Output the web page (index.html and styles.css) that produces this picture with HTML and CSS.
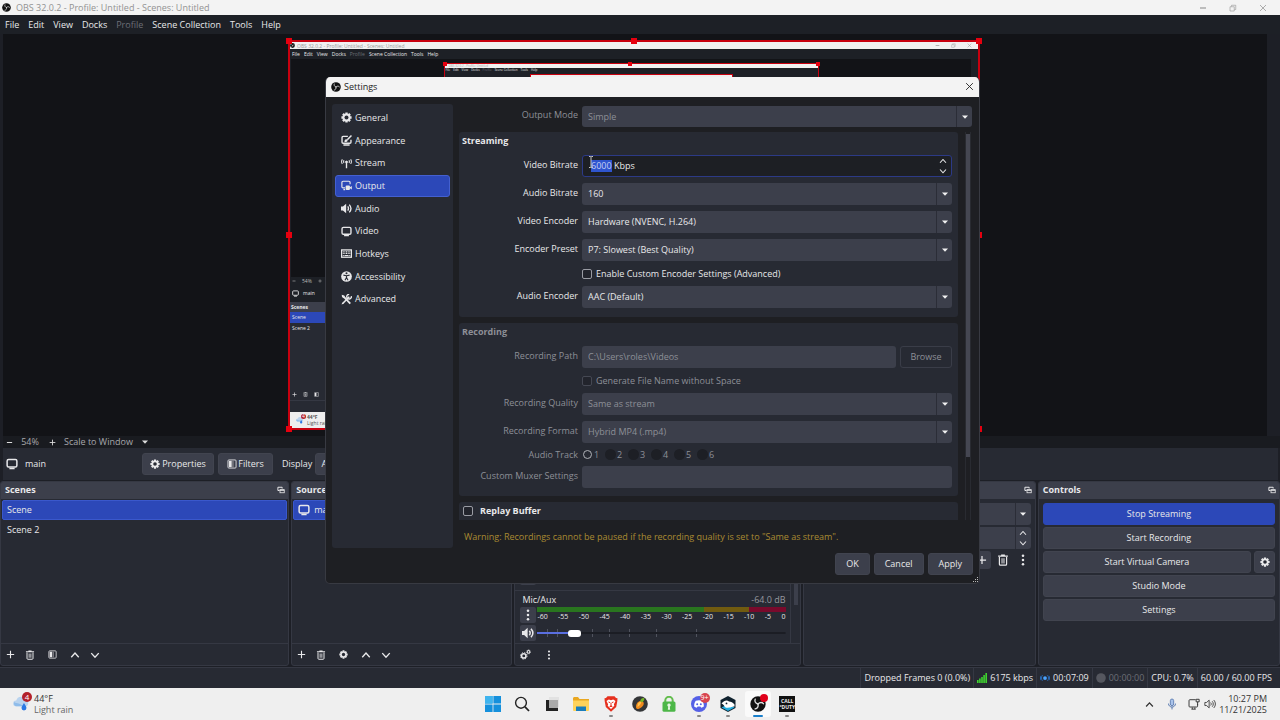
FILE: index.html
```html
<!DOCTYPE html>
<html lang="en">
<head>
<meta charset="utf-8">
<title>OBS 32.0.2 - Profile: Untitled - Scenes: Untitled</title>
<link rel="stylesheet" href="styles.css">
</head>
<body>
<svg class="sprite" aria-hidden="true">
  <symbol id="obs" viewBox="0 0 20 20"><circle cx="10" cy="10" r="9.6" fill="#111"/><g fill="none" stroke="#ddd" stroke-width="1.7" stroke-linecap="round"><path d="M10 10C6.500 9 5.500 6.500 6.500 4"/><path d="M10 10c2.500-2.600 5.200-2.400 6.800-.4"/><path d="M10 10c.8 3.600-.8 5.600-3.600 6.200"/></g></symbol>
  <symbol id="gear" viewBox="0 0 16 16"><g stroke="currentColor" stroke-width="3.400"><path d="M8 .6v14.800M.6 8h14.800M2.800 2.800l10.400 10.400M13.200 2.800L2.800 13.200"/></g><circle cx="8" cy="8" r="5.700" fill="currentColor"/><circle class="hole" cx="8" cy="8" r="2.900"/></symbol>
  <symbol id="gears" viewBox="0 0 16 16"><g fill="none" stroke="currentColor"><circle cx="5.500" cy="10" r="3.200" stroke-width="2.200"/><circle cx="5.500" cy="10" r="4.700" stroke-width="1.400" stroke-dasharray="2 1.690"/><circle cx="12.400" cy="4.200" r="1.900" stroke-width="1.500"/><circle cx="12.400" cy="4.200" r="3" stroke-width="1" stroke-dasharray="1.300 1.056"/></g></symbol>
  <symbol id="monitor" viewBox="0 0 16 16"><rect x="1.500" y="2" width="13" height="10" rx="2" fill="none" stroke="currentColor" stroke-width="2"/><path d="M4.500 13h7v2h-7z" fill="currentColor"/></symbol>
  <symbol id="appearance" viewBox="0 0 16 16"><path d="M10 2H3a1.500 1.500 0 0 0-1.500 1.500v7A1.500 1.500 0 0 0 3 12h10a1.500 1.500 0 0 0 1.500-1.500V7" fill="none" stroke="currentColor" stroke-width="2"/><path d="M3.500 13.500h9V15.500h-9z" fill="currentColor"/><path d="M15.200.8L9.200 7" stroke="currentColor" stroke-width="2.200"/><path d="M5 10c0-3 1.500-4 3.500-3.600L9.700 8C9.500 9.800 7.500 10.500 5 10z" fill="currentColor"/></symbol>
  <symbol id="stream" viewBox="0 0 16 16"><g fill="none" stroke="currentColor" stroke-width="1.500"><path d="M2 2C.6 4 .6 6.600 2 8.600M4.400 3.200c-.8 1.300-.8 2.900 0 4.200M14 2c1.400 2 1.400 4.600 0 6.600M11.600 3.200c.8 1.300.8 2.900 0 4.200"/></g><path d="M5.500 5.300L8 3.500l2.500 1.800L9 7.500V15H7V7.500z" fill="currentColor"/></symbol>
  <symbol id="output" viewBox="0 0 16 16"><path d="M6 11.500H3A1.700 1.700 0 0 1 1.300 9.800V3.500A1.700 1.700 0 0 1 3 1.800h8.500a1.700 1.700 0 0 1 1.700 1.700V6M3.500 14H6" fill="none" stroke="currentColor" stroke-width="1.700"/><rect x="6.800" y="8" width="6.200" height="6.500" rx="1.500" fill="currentColor"/><path d="M13 10.500l2.700-1.800v5L13 12z" fill="currentColor"/></symbol>
  <symbol id="speaker" viewBox="0 0 16 16"><path d="M0 5.200h2.800L7.500 1v14L2.800 10.800H0z" fill="currentColor"/><path d="M9.800 5c1.300 1.800 1.300 4.200 0 6M12 2.300c3 3.400 3 8 0 11.400" fill="none" stroke="currentColor" stroke-width="2"/></symbol>
  <symbol id="keyboard" viewBox="0 0 16 16"><rect x=".8" y="2.800" width="14.400" height="10.600" fill="none" stroke="currentColor" stroke-width="1.900"/><path d="M2.500 5.700h11M2.500 8.100h11" stroke="currentColor" stroke-width="1.600" stroke-dasharray="1.500 .9"/><path d="M2.500 10.800h1.500M5 10.800h6M12 10.800h1.500" stroke="currentColor" stroke-width="1.600"/></symbol>
  <symbol id="access" viewBox="0 0 16 16"><circle cx="8" cy="8" r="7.800" fill="currentColor"/><circle cx="8" cy="3.400" r="1.500" fill="#272a33"/><path d="M3.500 6l4.500.8 4.500-.8M8 6.500V9.500L5.800 13.500M8 9.500l2.200 4" fill="none" stroke="#272a33" stroke-width="1.600"/></symbol>
  <symbol id="tools" viewBox="0 0 16 16"><path d="M3.500 3.500L13.500 14" stroke="currentColor" stroke-width="2.600"/><path d="M1 1l3.800 1.300.6 2.700-1.700 1.200L1.500 4.500z" fill="currentColor"/><path d="M12 4L2.500 13.800" stroke="currentColor" stroke-width="2.400"/><path d="M15 3a3.400 3.400 0 1 1-3-2.500" fill="none" stroke="currentColor" stroke-width="2"/><path d="M.8 15.400l1-3 2 1.800z" fill="currentColor"/></symbol>
  <symbol id="filter" viewBox="0 0 16 16"><rect x="1.500" y="1.500" width="13" height="13" rx="1.500" fill="none" stroke="currentColor" stroke-width="1.400"/><path d="M3 3h4.500v10H3z" fill="currentColor"/><path d="M8.500 3h2v10h-2z" fill="currentColor" opacity=".45"/></symbol>
  <symbol id="plus" viewBox="0 0 16 16"><path d="M8 1.500v13M1.500 8h13" stroke="currentColor" stroke-width="2"/></symbol>
  <symbol id="minus" viewBox="0 0 16 16"><path d="M2 8h12" stroke="currentColor" stroke-width="2.400"/></symbol>
  <symbol id="trash" viewBox="0 0 16 16"><path d="M1.500 2.800h13M5.500 1.500h5" stroke="currentColor" stroke-width="1.800"/><path d="M3.200 4v9.500c0 .8.500 1.300 1.300 1.300h7c.8 0 1.300-.5 1.300-1.300V4" fill="none" stroke="currentColor" stroke-width="1.600"/><path d="M5.500 5.500h5v7h-5z" fill="currentColor" opacity=".55"/></symbol>
  <symbol id="up" viewBox="0 0 16 16"><path d="M2 11.500L8 5l6 6.500" fill="none" stroke="currentColor" stroke-width="2.200"/></symbol>
  <symbol id="down" viewBox="0 0 16 16"><path d="M2 5l6 6.500L14 5" fill="none" stroke="currentColor" stroke-width="2.200"/></symbol>
  <symbol id="dots" viewBox="0 0 16 16"><circle cx="8" cy="2.400" r="1.700" fill="currentColor"/><circle cx="8" cy="8" r="1.700" fill="currentColor"/><circle cx="8" cy="13.600" r="1.700" fill="currentColor"/></symbol>
  <symbol id="float" viewBox="0 0 16 16"><path d="M5 9H1.800V2.500h8.500V5" fill="none" stroke="currentColor" stroke-width="2"/><rect x="6" y="7.500" width="8.500" height="6" fill="none" stroke="currentColor" stroke-width="1.600"/><path d="M5.500 7h9v2.500h-9z" fill="currentColor"/></symbol>
  <symbol id="caret" viewBox="0 0 16 16"><path d="M2 5h12L8 11.500z" fill="currentColor"/></symbol>
  <symbol id="close" viewBox="0 0 16 16"><path d="M2 2l12 12M14 2L2 14" stroke="currentColor" stroke-width="1.600"/></symbol>
  <symbol id="restore" viewBox="0 0 16 16"><path d="M2 5.500h8.500V14H2zM5 5V2.500h8.500V11H11" fill="none" stroke="currentColor" stroke-width="1.300"/></symbol>
  <symbol id="rain" viewBox="0 0 24 24"><path d="M4 16.500a4 4 0 0 1 .6-8A7 7 0 0 1 18 8a4.500 4.500 0 0 1 1 8.500z" fill="#b9d3ee"/><path d="M4 16.500a4 4 0 0 1-2-6c3 3 9 1 12 6z" fill="#8fbcea"/><path d="M15.500 12c2.300 3.500 3.500 5.300 3.500 7a3.500 3.500 0 0 1-7 0c0-1.700 1.200-3.500 3.500-7z" fill="#2b78e4"/></symbol>
</svg>

<div class="desktop">
  <header class="titlebar">
    <svg class="i9"><use href="#obs"/></svg>
    <span>OBS 32.0.2 - Profile: Untitled - Scenes: Untitled</span>
    <div class="winbtns">
      <button aria-label="Minimize"><svg class="i8"><use href="#minus"/></svg></button>
      <button aria-label="Restore"><svg class="i8"><use href="#restore"/></svg></button>
      <button aria-label="Close"><svg class="i8"><use href="#close"/></svg></button>
    </div>
  </header>
  <nav class="menubar">
    <button>File</button><button>Edit</button><button>View</button><button>Docks</button><button class="dim" disabled>Profile</button><button>Scene Collection</button><button>Tools</button><button>Help</button>
  </nav>

  <main class="preview">
    <div class="canvas">
      <div class="mini">
        <div class="mini-title"><svg><use href="#obs"/></svg><span>OBS 32.0.2 - Profile: Untitled - Scenes: Untitled</span><i></i><svg><use href="#minus"/></svg><svg><use href="#restore"/></svg><svg><use href="#close"/></svg></div>
        <div class="mini-menu"><span>File</span><span>Edit</span><span>View</span><span>Docks</span><span class="dim">Profile</span><span>Scene Collection</span><span>Tools</span><span>Help</span></div>
        <div class="mini-stage">
          <div class="canvas nested">
            <div class="nest-title">OBS 32.0.2 - Profile: Untitled</div>
            <div class="nest-menu"><span>File</span><span>Edit</span><span>View</span><span>Docks</span><span class="dim">Profile</span><span>Scene Collection</span><span>Tools</span><span>Help</span></div>
            <div class="canvas third"></div>
            <b class="h tl"></b><b class="h tc"></b><b class="h tr"></b>
          </div>
        </div>
        <div class="mini-zoom"><svg><use href="#minus"/></svg><span>54%</span><svg><use href="#plus"/></svg><span>Scale</span></div>
        <div class="mini-source"><svg><use href="#monitor"/></svg><span>main</span></div>
        <div class="mini-head">Scenes</div>
        <div class="mini-row on">Scene</div>
        <div class="mini-row">Scene 2</div>
        <div class="mini-tools"><svg><use href="#plus"/></svg><svg><use href="#trash"/></svg><svg><use href="#filter"/></svg></div>
        <div class="mini-status"></div>
        <div class="mini-task"><svg><use href="#rain"/></svg><em>4</em><div><b>44°F</b><br>Light rain</div></div>
      </div>
      <b class="h tl"></b><b class="h tc"></b><b class="h tr"></b><b class="h ml"></b><b class="h mr"></b><b class="h bl"></b><b class="h br"></b>
    </div>
  </main>

  <div class="zoombar">
    <button aria-label="Zoom out"><svg class="i7"><use href="#minus"/></svg></button>
    <span class="pct">54%</span>
    <button aria-label="Zoom in"><svg class="i7"><use href="#plus"/></svg></button>
    <span class="scale">Scale to Window</span>
    <button aria-label="Scale mode"><svg class="i8"><use href="#caret"/></svg></button>
  </div>

  <section class="context">
    <svg class="i12"><use href="#monitor"/></svg>
    <span class="src">main</span>
    <button class="btn props"><svg class="i10"><use href="#gear"/></svg>Properties</button>
    <button class="btn filt"><svg class="i10"><use href="#filter"/></svg>Filters</button>
    <label for="display">Display</label>
    <select id="display" class="btn disp"><option>ASUS VG248</option></select>
  </section>

  <section class="docks">
    <article class="dock scenes">
      <h2>Scenes<svg class="i8"><use href="#float"/></svg></h2>
      <ul><li class="on">Scene</li><li>Scene 2</li></ul>
      <footer>
        <button aria-label="Add scene"><svg class="i9"><use href="#plus"/></svg></button>
        <button aria-label="Remove scene"><svg class="i10"><use href="#trash"/></svg></button>
        <button aria-label="Scene filters" class="wide"><svg class="i9"><use href="#filter"/></svg></button>
        <button aria-label="Move up" class="wide"><svg class="i10"><use href="#up"/></svg></button>
        <button aria-label="Move down"><svg class="i10"><use href="#down"/></svg></button>
      </footer>
    </article>
    <article class="dock sources">
      <h2>Sources<svg class="i8"><use href="#float"/></svg></h2>
      <ul><li class="on"><svg class="i12"><use href="#monitor"/></svg>main</li></ul>
      <footer>
        <button aria-label="Add source"><svg class="i9"><use href="#plus"/></svg></button>
        <button aria-label="Remove source"><svg class="i10"><use href="#trash"/></svg></button>
        <button aria-label="Source properties" class="wide"><svg class="i9"><use href="#gear"/></svg></button>
        <button aria-label="Move up" class="wide"><svg class="i10"><use href="#up"/></svg></button>
        <button aria-label="Move down"><svg class="i10"><use href="#down"/></svg></button>
      </footer>
    </article>
    <article class="dock mixer">
      <h2>Audio Mixer<svg class="i8"><use href="#float"/></svg></h2>
      <div class="mixbody">
        <div class="channels">
          <div class="prev"><button class="tile" aria-label="Mute desktop audio"></button><i class="knob"></i></div>
          <div class="chan">
            <div class="chead"><label for="mic">Mic/Aux</label><span>-64.0 dB</span></div>
            <div class="crow">
              <button class="tile" aria-label="Mic options"><svg class="i12"><use href="#dots"/></svg></button>
              <div class="meter">
                <div class="bar"></div>
                <div class="nums"><span>-60</span><span>-55</span><span>-50</span><span>-45</span><span>-40</span><span>-35</span><span>-30</span><span>-25</span><span>-20</span><span>-15</span><span>-10</span><span>-5</span><span>0</span></div>
              </div>
            </div>
            <div class="crow">
              <button class="tile" aria-label="Mute mic"><svg class="i12"><use href="#speaker"/></svg></button>
              <input id="mic" type="range" min="0" max="100" value="13">
            </div>
          </div>
        </div>
        <div class="mixscroll"><i></i></div>
      </div>
      <footer>
        <button aria-label="Audio properties"><svg class="i11"><use href="#gears"/></svg></button>
        <button aria-label="Mixer menu" class="wide"><svg class="i10"><use href="#dots"/></svg></button>
      </footer>
    </article>
    <article class="dock trans">
      <h2>Scene Transitions<svg class="i8"><use href="#float"/></svg></h2>
      <div class="transbody">
        <div class="combo"><select aria-label="Transition"><option></option></select><span class="arrow"><svg class="i8"><use href="#caret"/></svg></span></div>
        <div class="combo"><input type="text" aria-label="Duration"><span class="spin"><svg class="i8"><use href="#up"/></svg><svg class="i8"><use href="#down"/></svg></span></div>
        <div class="ticons">
          <button aria-label="Add transition" class="lit"><svg class="i10"><use href="#plus"/></svg></button>
          <button aria-label="Remove transition"><svg class="i12"><use href="#trash"/></svg></button>
          <button aria-label="Transition menu"><svg class="i12"><use href="#dots"/></svg></button>
        </div>
      </div>
    </article>
    <article class="dock controls">
      <h2>Controls<svg class="i8"><use href="#float"/></svg></h2>
      <div class="ctlbody">
        <button class="btn primary">Stop Streaming</button>
        <button class="btn">Start Recording</button>
        <div class="pair"><button class="btn">Start Virtual Camera</button><button class="btn cog" aria-label="Virtual camera settings"><svg class="i10"><use href="#gear"/></svg></button></div>
        <button class="btn">Studio Mode</button>
        <button class="btn">Settings</button>
      </div>
    </article>
  </section>

  <section class="status">
    <div>Dropped Frames 0 (0.0%)</div>
    <div><svg class="i10" viewBox="0 0 10 10"><path d="M0 7h1.600v3H0zM2.100 5.500h1.600V10H2.100zM4.200 4h1.600v6H4.200zM6.300 2h1.600v8H6.300zM8.400 0H10v10H8.400z" fill="#3fd52f"/></svg>6175 kbps</div>
    <div><svg class="i10" viewBox="0 0 16 16"><circle cx="8" cy="8" r="3" fill="#4aa3ff"/><path d="M4 3.500c-2.200 2.600-2.200 6.400 0 9M12 3.500c2.200 2.600 2.200 6.400 0 9M1.500 4.500c-1 2.200-1 4.800 0 7M14.500 4.500c1 2.200 1 4.800 0 7" fill="none" stroke="#2a71c4" stroke-width="1.400"/></svg>00:07:09</div>
    <div class="dim"><svg class="i10" viewBox="0 0 10 10"><circle cx="5" cy="5" r="4.800" fill="#55575f"/></svg>00:00:00</div>
    <div>CPU: 0.7%</div>
    <div>60.00 / 60.00 FPS</div>
  </section>

  <footer class="taskbar">
    <div class="weather"><span class="wicon"><svg><use href="#rain"/></svg><em>4</em></span><div><b>44°F</b><br>Light rain</div></div>
    <div class="apps">
      <button aria-label="Start"><svg viewBox="0 0 16 16"><path d="M0 0h7.600v7.600H0zM8.400 0H16v7.600H8.400zM0 8.400h7.600V16H0zM8.400 8.400H16V16H8.400z" fill="#1590dc"/><path d="M0 0h7.600v7.600H0z" fill="#3fb4ee"/></svg></button>
      <button aria-label="Search"><svg viewBox="0 0 16 16"><circle cx="7" cy="6.800" r="5.400" fill="none" stroke="#222" stroke-width="1.400"/><path d="M11 10.800l4 4.200" stroke="#222" stroke-width="1.800"/></svg></button>
      <button aria-label="Task view"><svg viewBox="0 0 16 16"><path d="M5 1h10v10H5z" fill="#e2e2e2"/><path d="M2 4h3v8h9v3H2z" fill="#222"/><path d="M5 4h9v8H5z" fill="#aaa"/></svg></button>
      <button aria-label="File Explorer"><svg viewBox="0 0 16 16"><path d="M0 2.500C0 1.600.6 1 1.500 1H5l1.500 2H16v11H0z" fill="#e9a720"/><path d="M0 4.500h16V14a1 1 0 0 1-1 1H1a1 1 0 0 1-1-1z" fill="#ffd35b"/><path d="M3 10.500h10V15H3z" fill="#1a7dbb"/></svg></button>
      <button aria-label="Brave" class="run"><svg viewBox="0 0 16 16"><path d="M4.500.3h7L13 2l1.500.3-.2 3L13.200 11 8 15.800 2.800 11 1.700 5.300l-.2-3L3 2z" fill="#e6301e"/><path d="M3.500 5l2.300-1.500L8 4.200l2.200-.7L12.500 5l-1.600 3.300.4 1.500L8 13l-3.300-3.200.4-1.500z" fill="#fff"/><path d="M5.500 6l1.800.7M10.500 6l-1.800.7M8 7v2.500l-1.200 1h2.400L8 9.500" stroke="#e6301e" stroke-width="1" fill="none"/></svg></button>
      <button aria-label="FL Studio"><svg viewBox="0 0 16 16"><circle cx="8" cy="8" r="7.800" fill="#343638"/><path d="M10.800 5.200C13 7.500 11 10.500 8.800 11.800 7 13 5.200 13.500 4.400 12.600 3.600 11 4 8.500 5.500 6.600 7 4.800 9.200 4 10.800 5.200z" fill="#f08a1d"/><path d="M6 7.500c1.300-1.500 2.500-1.700 3.300-1C8.500 8.500 7 10 5.300 11z" fill="#ffc34d"/><path d="M8.300 5.200C8.300 3 9.800 1.500 12.300 2c.4 2-1 4-3 4.200z" fill="#74b52a"/></svg></button>
      <button aria-label="VPN"><svg viewBox="0 0 16 16"><path d="M4.300 7V4.500a3.700 3.700 0 0 1 7.400 0V7" fill="none" stroke="#62bd4c" stroke-width="2"/><rect x="1.500" y="5.500" width="13" height="10.300" rx="1.500" fill="#4db748"/><path d="M8 7.500a1.700 1.700 0 0 1 .8 3.200l.4 3H6.800l.4-3A1.700 1.700 0 0 1 8 7.500z" fill="#e5f6e0"/></svg></button>
      <button aria-label="Discord" class="run"><svg viewBox="0 0 16 16"><circle cx="8" cy="8" r="8" fill="#5560e6"/><path d="M4.800 4.800C7 4 9 4 11.200 4.800c1.200 1.700 1.800 3.700 1.600 5.700-1 .8-1.700 1-2.600 1.200l-.8-1.200H6.600l-.8 1.200c-.9-.2-1.600-.4-2.600-1.200-.2-2 .4-4 1.600-5.700z" fill="#fff"/><circle cx="6.200" cy="8.300" r="1" fill="#5560e6"/><circle cx="9.800" cy="8.300" r="1" fill="#5560e6"/></svg><em>9+</em></button>
      <button aria-label="Game launcher" class="run"><svg viewBox="0 0 16 16"><path d="M8 0l7.500 4v8L8 16 .5 12V4z" fill="#10222e"/><path d="M1.500 11.500L8 15l6.500-3.500-3-1.500-7 0z" fill="#23aee0"/><path d="M1.500 7.500C4 4.500 7 3.800 9 5.500c2 .3 4 1 5.500 3v2c-2-.3-3.500 1-5.500 1-1.500.6-3 .5-4-.5C4.500 10 3.500 8.500 1.500 7.500z" fill="#fff"/><circle cx="6.500" cy="7.400" r=".9" fill="#10222e"/></svg></button>
      <button aria-label="OBS Studio" class="run active"><svg><use href="#obs"/></svg><i class="rec"></i></button>
      <button aria-label="Call of Duty" class="run"><span class="cod">CALL<br>°DUTY</span></button>
    </div>
    <div class="tray">
      <svg class="i9"><use href="#up"/></svg>
      <svg class="mic" viewBox="0 0 12 14"><rect x="4" y="1" width="4" height="8" rx="2" fill="#a9c3ea" stroke="#4a6da8" stroke-width=".9"/><path d="M1.800 6.500C2 12 10 12 10.200 6.500M6 10.700V13.500" fill="none" stroke="#4a6da8" stroke-width="1.100"/></svg>
      <svg class="net" viewBox="0 0 14 14"><path d="M9 2H2.200A1 1 0 0 0 1.200 3v6.500a1 1 0 0 0 1 1h8a1 1 0 0 0 1-1V7M4 13h5M5 11v2M8 11v2" fill="none" stroke="#333" stroke-width="1.100"/><path d="M9.500 1.500h3.500v3h-3.500zM11.200 4.500V8" fill="none" stroke="#333" stroke-width="1.100"/></svg>
      <svg class="vol" viewBox="0 0 14 14"><path d="M1 5.200h2L6 2.500v9L3 8.800H1z" fill="none" stroke="#333"/><path d="M7.800 5.300c.8 1 .8 2.400 0 3.400M9.600 3.800c1.600 1.900 1.600 4.500 0 6.400M11.300 2.300c2.600 2.800 2.600 6.600 0 9.400" fill="none" stroke="#333"/></svg>
      <time>10:27 PM<br>11/21/2025</time>
    </div>
  </footer>

  <div class="dialog" role="dialog" aria-label="Settings">
    <header class="dtitle"><svg class="i10"><use href="#obs"/></svg><span>Settings</span><button aria-label="Close settings"><svg class="i9"><use href="#close"/></svg></button></header>
    <div class="dbody">
      <nav class="side">
        <button><svg class="i11"><use href="#gear"/></svg>General</button>
        <button><svg class="i11"><use href="#appearance"/></svg>Appearance</button>
        <button><svg class="i11"><use href="#stream"/></svg>Stream</button>
        <button class="on"><svg class="i11"><use href="#output"/></svg>Output</button>
        <button><svg class="i11"><use href="#speaker"/></svg>Audio</button>
        <button><svg class="i11"><use href="#monitor"/></svg>Video</button>
        <button><svg class="i11"><use href="#keyboard"/></svg>Hotkeys</button>
        <button><svg class="i11"><use href="#access"/></svg>Accessibility</button>
        <button><svg class="i11"><use href="#tools"/></svg>Advanced</button>
      </nav>
      <div class="dmain">
        <div class="mode off"><label for="mode">Output Mode</label><div class="combo"><select id="mode" disabled><option>Simple</option></select><span class="arrow"><svg class="i8"><use href="#caret"/></svg></span></div></div>
        <div class="scroll">
          <div class="groups">
            <section class="group">
              <h3>Streaming</h3>
              <div class="form">
                <label for="vb">Video Bitrate</label>
                <div class="combo focus"><input id="vb" type="text" value="6000 Kbps"><span class="spin"><svg class="i8"><use href="#up"/></svg><svg class="i8"><use href="#down"/></svg></span>
                  <svg class="ibeam" viewBox="0 0 6 12"><path d="M1 .5h1.500L3 1l.5-.5H5M3 1v10M1 11.500h1.500L3 11l.5.500H5" fill="none" stroke="#c9c9c9"/></svg></div>
                <label for="ab">Audio Bitrate</label>
                <div class="combo"><select id="ab"><option>160</option></select><span class="arrow"><svg class="i8"><use href="#caret"/></svg></span></div>
                <label for="ve">Video Encoder</label>
                <div class="combo"><select id="ve"><option>Hardware (NVENC, H.264)</option></select><span class="arrow"><svg class="i8"><use href="#caret"/></svg></span></div>
                <label for="ep">Encoder Preset</label>
                <div class="combo"><select id="ep"><option>P7: Slowest (Best Quality)</option></select><span class="arrow"><svg class="i8"><use href="#caret"/></svg></span></div>
                <label class="check"><input type="checkbox">Enable Custom Encoder Settings (Advanced)</label>
                <label for="ae">Audio Encoder</label>
                <div class="combo"><select id="ae"><option>AAC (Default)</option></select><span class="arrow"><svg class="i8"><use href="#caret"/></svg></span></div>
              </div>
            </section>
            <section class="group off">
              <h3>Recording</h3>
              <div class="form">
                <label for="rp">Recording Path</label>
                <div class="path"><div class="combo"><input id="rp" type="text" value="C:\Users\roles\Videos" disabled></div><button class="browse" disabled>Browse</button></div>
                <label class="check"><input type="checkbox" disabled>Generate File Name without Space</label>
                <label for="rq">Recording Quality</label>
                <div class="combo"><select id="rq" disabled><option>Same as stream</option></select><span class="arrow"><svg class="i8"><use href="#caret"/></svg></span></div>
                <label for="rf">Recording Format</label>
                <div class="combo"><select id="rf" disabled><option>Hybrid MP4 (.mp4)</option></select><span class="arrow"><svg class="i8"><use href="#caret"/></svg></span></div>
                <span class="lab short">Audio Track</span>
                <div class="tracks"><label><input type="radio" name="t" class="first" disabled>1</label><label><input type="radio" name="t" disabled>2</label><label><input type="radio" name="t" disabled>3</label><label><input type="radio" name="t" disabled>4</label><label><input type="radio" name="t" disabled>5</label><label><input type="radio" name="t" disabled>6</label></div>
                <label for="cm">Custom Muxer Settings</label>
                <div class="combo"><input id="cm" type="text" disabled></div>
              </div>
            </section>
            <section class="group">
              <h3><label class="replay"><input type="checkbox">Replay Buffer</label></h3>
            </section>
          </div>
          <div class="track"><i></i></div>
        </div>
        <p class="warn">Warning: Recordings cannot be paused if the recording quality is set to "Same as stream".</p>
      </div>
    </div>
    <footer class="dfoot"><button class="btn">OK</button><button class="btn">Cancel</button><button class="btn">Apply</button></footer>
    <svg class="grip" viewBox="0 0 6 6"><path d="M4 0h1v1H4zM2 2h1v1H2zM4 2h1v1H4zM0 4h1v1H0zM2 4h1v1H2zM4 4h1v1H4z" fill="#bbb"/></svg>
  </div>
</div>
<script src="app.js"></script>
</body>
</html>
```

FILE: styles.css
```css
:root {
  --win: #1d1f26;
  --base: #272a33;
  --ctl: #3c3f4b;
  --line: #353843;
  --blue: #2c48b8;
  --text: #e8e8ea;
  --off: #8d8f97;
}
* { box-sizing: border-box; }
body { margin: 0; font: 9px/12px "Open Sans", "Noto Sans", sans-serif; color: var(--text); background: var(--win); }
button, select, input { font: inherit; color: inherit; margin: 0; padding: 0; border: 0; background: none; outline: 0; }
button { display: flex; align-items: center; justify-content: center; }
select { appearance: none; opacity: 1; }
svg { display: block; flex: none; }
h2, h3, p, ul { margin: 0; padding: 0; font-size: 9px; }
.sprite { position: absolute; width: 0; height: 0; }
.hole { fill: #272a33; }
.i7 { width: 7px; height: 7px; }
.i8 { width: 8px; height: 8px; }
.i9 { width: 9px; height: 9px; }
.i10 { width: 10px; height: 10px; }
.i11 { width: 11px; height: 11px; }
.i12 { width: 12px; height: 12px; }
.dim { color: #6c6e76; }

.desktop { position: relative; min-height: 100vh; display: flex; flex-direction: column; }
.titlebar { height: 15px; background: #f3f3f3; color: #929292; display: flex; align-items: center; gap: 5px; padding-left: 2px; }
.winbtns { margin-left: auto; display: flex; gap: 22px; padding-right: 13px; color: #999; }
.menubar { height: 19px; background: #1d2026; display: flex; align-items: center; gap: 9px; padding-left: 5px; }

.preview { flex: 1; margin: 0 13px 0 3px; padding-right: 2px; background: #121317; display: flex; align-items: center; justify-content: center; }
.canvas { position: relative; border: 2px solid #c8000f; }
.preview > .canvas { width: 692px; height: 390px; }
.h { position: absolute; width: 6px; height: 6px; background: #e6000f; }
.tl { left: -4px; top: -4px; }
.tc { left: calc(50% - 3px); top: -4px; }
.tr { right: -4px; top: -4px; }
.ml { left: -4px; top: calc(50% - 3px); }
.mr { right: -4px; top: calc(50% - 3px); }
.bl { left: -4px; bottom: -4px; }
.br { right: -4px; bottom: -4px; }
.mini { height: 100%; display: flex; flex-direction: column; font-size: 5px; line-height: 8px; background: #1d2026; overflow: hidden; }
.mini svg { width: 5px; height: 5px; }
.mini-title { height: 7px; background: #f1f1f1; color: #999; display: flex; align-items: center; gap: 2px; padding-right: 6px; }
.mini-title i { flex: 1; }
.mini-title svg + svg { margin-left: 9px; }
.mini-menu { height: 10px; display: flex; align-items: center; gap: 4px; padding-left: 2px; }
.mini-stage { flex: 1; margin: 0 7px 0 1px; background: #121317; display: flex; justify-content: center; padding-top: 4px; }
.nested { width: 375px; height: 211px; border-width: 1px; background: #1d2026; }
.nested > .h { width: 4px; height: 4px; }
.nested > .tl { left: -2px; top: -2px; }
.nested > .tc { top: -2px; }
.nested > .tr { right: -2px; top: -2px; }
.nest-title { height: 4px; background: #f1f1f1; color: #aaa; font-size: 3px; line-height: 4px; padding-left: 4px; }
.nest-menu { height: 5px; display: flex; gap: 3px; font-size: 3px; line-height: 5px; padding-left: 1px; }
.third { width: 203px; height: 110px; margin: 1px auto 0; border-width: 1px; background: #eee; }
.mini-zoom { height: 7px; display: flex; align-items: center; gap: 6px; padding-left: 2px; color: #bbb; }
.mini-zoom svg { width: 4px; height: 4px; }
.mini-source { height: 18px; display: flex; align-items: center; gap: 4px; padding-left: 2px; }
.mini-source svg { width: 7px; height: 7px; }
.mini-head { height: 10px; line-height: 10px; background: var(--ctl); font-weight: bold; padding-left: 1px; }
.mini-row { height: 11px; line-height: 11px; padding-left: 2px; background: var(--base); }
.mini-row.on { background: var(--blue); }
.mini-tools { height: 67px; display: flex; align-items: flex-end; gap: 6px; padding: 0 2px 3px; background: var(--base); border-bottom: 1px solid var(--line); }
.mini-status { height: 11px; background: var(--base); }
.mini-task { height: 16px; background: #eee; display: flex; align-items: center; padding-left: 6px; color: #555; line-height: 6px; }
.mini-task svg { width: 8px; height: 8px; }
.mini-task em { width: 5px; height: 5px; border-radius: 50%; background: #b3202a; color: #fff; font-style: normal; line-height: 5px; text-align: center; align-self: flex-start; margin: 2px 1px 0 -3px; }

.zoombar { height: 12px; margin-left: 3px; background: #191b20; display: flex; align-items: center; padding-left: 3px; color: #a6a7ac; }
.zoombar button { color: #ddd; }
.zoombar .pct { width: 34px; text-align: center; margin-right: 2px; }
.zoombar .scale { width: 85px; padding-left: 8px; white-space: nowrap; }

.btn { background: var(--ctl); border-radius: 3px; height: 22px; border: 1px solid #41444f; }
.context { height: 32px; margin: 0 2px 0 3px; background: var(--base); display: flex; align-items: center; padding-left: 3px; white-space: nowrap; }
.context .src { width: 117px; padding-left: 7px; margin-right: 7px; }
.context .props { width: 72px; gap: 2px; margin-right: 4px; }
.context .filt { width: 55px; gap: 1px; margin-right: 9px; }
.context .disp { width: 200px; margin-left: 3px; padding-left: 5px; }

.docks { height: 185px; margin-top: 1px; display: grid; grid-template-columns: 289fr 221fr 286fr 233fr 242fr; gap: 2px; }
.dock { background: var(--base); display: flex; flex-direction: column; border: 1px solid var(--line); border-radius: 3px; min-width: 0; overflow: hidden; }
.dock h2 { height: 18px; background: var(--ctl); display: flex; align-items: center; justify-content: space-between; padding: 0 4px 0 5px; margin: -1px -1px 0; }
.dock ul { list-style: none; padding: 1px; flex: 1; }
.dock li { height: 20px; display: flex; align-items: center; padding-left: 4px; border: 1px solid transparent; border-radius: 2px; }
.dock li.on { background: var(--blue); border-color: #3a58cc; }
.dock li svg { margin-right: 4px; }
.dock footer { height: 22px; border-top: 1px solid var(--line); display: flex; align-items: center; gap: 10px; padding-left: 5px; }
.dock footer .wide { margin-left: 3px; }

.mixbody { flex: 1; min-height: 0; display: flex; }
.channels { flex: 1; display: flex; flex-direction: column; justify-content: flex-end; border-right: 1px solid var(--line); }
.prev { height: 10px; display: flex; justify-content: space-between; align-items: flex-start; padding: 0 5px; }
.prev .tile { height: 5px; }
.knob { width: 12px; height: 3px; background: #fff; border-radius: 2px; }
.chan { border-top: 1px solid var(--line); padding: 2px 4px 0 5px; }
.chead { display: flex; justify-content: space-between; height: 14px; line-height: 14px; padding-left: 2px; }
.chead span { color: #96989f; }
.crow { display: flex; gap: 1px; height: 18px; }
.tile { width: 16px; height: 16px; background: var(--ctl); border-radius: 2px; }
.meter { flex: 1; }
.bar { height: 5px; background: linear-gradient(90deg, #29751f 67%, #715b10 67% 85%, #790a2c 85%); }
.nums { display: flex; justify-content: space-between; font-size: 7px; line-height: 9px; }
.crow input {
  appearance: none; flex: 1; min-width: 0; height: 16px;
  --tick: linear-gradient(#50535e, #50535e);
  background:
    linear-gradient(90deg, #5a6fe0 13%, #1b1d24 13%) center / 100% 2px no-repeat,
    var(--tick) 4% 50% / 1px 8px no-repeat, var(--tick) 8% 50% / 1px 8px no-repeat,
    var(--tick) 22% 50% / 1px 8px no-repeat, var(--tick) 29% 50% / 1px 8px no-repeat,
    var(--tick) 37% 50% / 1px 8px no-repeat, var(--tick) 48% 50% / 1px 8px no-repeat,
    var(--tick) 64% 50% / 1px 8px no-repeat;
}
.crow input::-webkit-slider-thumb { appearance: none; width: 13px; height: 7px; border-radius: 3px; background: #fff; }
.mixscroll { width: 9px; padding-left: 3px; }
.mixscroll i { display: block; width: 4px; height: 106px; background: var(--ctl); }

.transbody, .ctlbody { padding: 4px; display: flex; flex-direction: column; gap: 2px; }
.transbody .combo { flex: none; }
.ctlbody .btn { width: 100%; }
.pair { display: flex; gap: 3px; }
.pair .cog { width: 21px; flex: none; }
.btn.primary { background: var(--blue); border-color: var(--blue); }
.ctlbody .hole { fill: var(--ctl); }
.ticons { display: flex; justify-content: flex-end; gap: 4px; }
.ticons button { width: 16px; height: 18px; }
.ticons .lit { background: var(--ctl); width: 18px; border-radius: 3px; }

.status { height: 21px; margin-top: 1px; background: var(--base); border-top: 1px solid var(--line); display: flex; justify-content: flex-end; padding-right: 5px; }
.status div { display: flex; align-items: center; gap: 3px; border-left: 1px solid var(--line); padding: 0 3px; white-space: nowrap; }

.taskbar { height: 32px; background: #efefef; color: #333; display: grid; grid-template-columns: 1fr 324px 1fr; align-items: center; }
.weather { display: flex; gap: 2px; padding-left: 13px; line-height: 11px; color: #666; }
.weather b { color: #333; font-weight: normal; }
.wicon { position: relative; width: 19px; }
.wicon svg { width: 17px; height: 20px; }
em { font-style: normal; }
.wicon em, .apps em { position: absolute; top: -1px; right: 0; width: 10px; height: 10px; border-radius: 50%; background: #b3202a; color: #fff; font-size: 8px; line-height: 10px; text-align: center; }
.apps { display: flex; height: 32px; }
.apps button { position: relative; flex: 1; border-radius: 3px; margin: 3px 2px; }
.apps svg { width: 16px; height: 16px; }
.apps em { background: #d8434f; font-size: 7px; top: 2px; right: 2px; }
.apps .run::after { content: ""; position: absolute; bottom: 0; left: calc(50% - 2px); width: 4px; height: 2px; border-radius: 1px; background: #888; }
.apps .active { background: #fafafa; }
.apps .active::after { width: 10px; left: calc(50% - 5px); background: #1a7fcb; }
.rec { position: absolute; top: 3px; right: 3px; width: 8px; height: 8px; border-radius: 50%; background: #e0001b; }
.cod { width: 16px; height: 16px; background: #111; color: #eee; font-size: 5px; line-height: 6px; font-weight: bold; padding-top: 2px; overflow: hidden; }
.tray { display: flex; align-items: center; justify-content: flex-end; padding-right: 13px; line-height: 11px; text-align: right; }
.tray .mic { width: 10px; height: 12px; margin: 0 11px 0 13px; }
.tray .net { width: 12px; height: 12px; margin-right: 4px; }
.tray .vol { width: 12px; height: 12px; }
.tray time { width: 51px; }

.dialog { position: absolute; left: 325px; top: 77px; width: 655px; background: #1e1f23; border: 1px solid #383a42; border-width: 0 1px 1px; border-radius: 5px; overflow: hidden; }
.dtitle { height: 20px; background: #f3f3f3; color: #222; display: flex; align-items: center; gap: 3px; padding: 0 5px 1px; }
.dtitle button { margin-left: auto; }
.dbody { display: flex; gap: 6px; padding: 7px 6px 0; }
.side { width: 121px; height: 444px; background: var(--base); border-radius: 3px; padding: 3px 3px 237px; display: flex; flex-direction: column; }
.side button { flex: 1; justify-content: flex-start; gap: 3px; padding-left: 5px; border: 1px solid transparent; border-radius: 3px; margin-bottom: 1px; }
.side .on { background: var(--blue); border-color: #4460d0; }
.dmain { flex: 1; padding-top: 2px; }
.combo { position: relative; display: flex; flex: 1; height: 22px; background: var(--ctl); border-radius: 3px; color: var(--text); }
.combo select, .combo input { flex: 1; min-width: 0; padding-left: 6px; }
.combo select:disabled, .combo input:disabled { color: var(--off); opacity: 1; }
.arrow { width: 16px; border-left: 1px solid #2b2d37; display: flex; align-items: center; justify-content: center; color: #f2f2f2; }
.spin { width: 16px; display: flex; flex-direction: column; align-items: center; justify-content: space-evenly; }
.trans .spin { border-left: 1px solid #2b2d37; }
.focus { background: #1d1f24; border: 1px solid #2c3a86; }
.focus input { padding-left: 8px; }
.focus input::selection { background: #2f55cf; color: #c4cdf2; }
.ibeam { position: absolute; left: 5px; top: 0; width: 6px; height: 12px; }
.off { color: var(--off); }
.mode { display: flex; gap: 4px; margin-bottom: 4px; padding-right: 1px; }
.mode label { width: 119px; text-align: right; line-height: 18px; }
.mode .combo { height: 21px; margin-bottom: 1px; }
.scroll { display: flex; height: 388px; overflow: hidden; }
.groups { width: 499px; display: flex; flex-direction: column; gap: 6px; }
.group { background: var(--base); border-radius: 3px; padding: 3px 6px 8px 3px; flex: none; }
.group:first-child { padding-bottom: 9px; }
.group h3 { height: 20px; line-height: 12px; }
.form { display: grid; grid-template-columns: 116px 1fr; gap: 6px 4px; }
.form > label, .lab { text-align: right; line-height: 19px; height: 22px; white-space: nowrap; }
.form > .check { grid-column: 2; display: flex; align-items: center; height: 13px; gap: 4px; line-height: 13px; }
.form > .short { height: 11px; line-height: 11px; }
input[type=checkbox] { appearance: none; width: 10px; height: 10px; border: 1px solid #9a9ca4; border-radius: 2px; background: #22242c; }
input[type=checkbox]:disabled { border-color: #454853; }
.path { display: flex; gap: 4px; }
.browse { width: 52px; border: 1px solid #3a3d48; border-radius: 3px; color: var(--off); }
.tracks { display: flex; }
.tracks label { display: flex; align-items: center; width: 23px; height: 11px; gap: 1px; }
.tracks input { appearance: none; width: 11px; height: 11px; border-radius: 50%; background: #1d1f25; }
.tracks .first { width: 9px; height: 9px; border: 1px solid #b0b2b8; margin: 1px; background: none; }
.replay { display: flex; align-items: center; gap: 7px; padding-left: 1px; height: 12px; }
.track { width: 6px; margin-left: 7px; border: 1px solid #292b31; border-width: 0 1px; }
.track i { display: block; height: 323px; margin-top: 2px; background: #454752; }
.warn { color: #a98a32; line-height: 34px; height: 28px; padding-left: 5px; }
.dfoot { display: flex; justify-content: flex-end; gap: 4px; padding: 5px 6px 8px; }
.dfoot .btn { padding: 0 10px; }
.grip { position: absolute; right: 0; bottom: 0; width: 6px; height: 6px; }
```

FILE: app.js
```js
const bitrate = document.getElementById('vb');
bitrate.focus();
bitrate.setSelectionRange(0, 4);
```
